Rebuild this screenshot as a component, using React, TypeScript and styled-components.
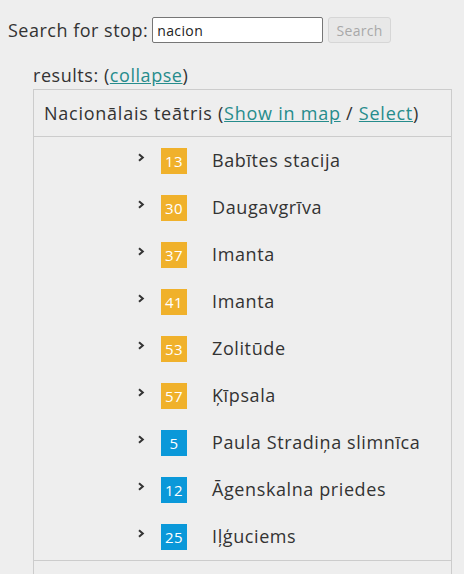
import React from "react";
import styled, { createGlobalStyle } from "styled-components";

const Global = createGlobalStyle`
  html, body { margin: 0; padding: 0; background: #eeeeee; }
  body { font-family: "Open Sans", "Noto Sans", sans-serif; color: #333333; }
`;

const Page = styled.div`
  padding: 17px 8px 0 8px;
  height: 557px;
  overflow: hidden;
`;

const SearchRow = styled.form`
  display: flex;
  align-items: center;
  height: 26px;
`;

const Label = styled.label`
  font-size: 18px;
  letter-spacing: 0.5px;
  margin-right: 4px;
`;

const Input = styled.input`
  box-sizing: border-box;
  width: 171px;
  height: 26px;
  border: 1px solid #767676;
  border-radius: 2px;
  background: #fff;
  font-family: inherit;
  font-size: 14px;
  letter-spacing: 0.4px;
  color: #222;
  padding: 0 4px;
  margin-right: 5px;
`;

const Button = styled.button`
  box-sizing: border-box;
  height: 26px;
  width: 63px;
  border: 1px solid #d6d6d6;
  border-radius: 3px;
  background: #e8e8e8;
  color: #a8a8a8;
  font-family: inherit;
  font-size: 14px;
  letter-spacing: 0.3px;
  padding: 0;
`;

const Results = styled.section`
  margin: 22px 0 0 25px;
  width: 419px;
`;

const ResultsTitle = styled.div`
  font-size: 18px;
  letter-spacing: 0.55px;
  line-height: 20px;
  height: 24px;
`;

const Link = styled.a`
  color: #268c8c;
  text-decoration: underline;
  cursor: pointer;
`;

const Box = styled.div`
  border: 1px solid #cccccc;
  border-bottom: none;
  height: 600px;
`;

const Header = styled.div`
  height: 47px;
  display: flex;
  align-items: center;
  padding: 0 0 1px 10px;
  box-sizing: border-box;
  font-size: 18px;
  letter-spacing: 0.75px;
  white-space: nowrap;
  border-bottom: 1px solid #cccccc;
`;

const List = styled.ul`
  list-style: none;
  margin: 0;
  padding: 0 0 0 100px;
  border-bottom: 1px solid #cccccc;
`;

const Row = styled.li`
  height: 47px;
  display: grid;
  grid-template-columns: 27px 26px 1fr;
  align-items: center;
`;

const Chevron = styled.svg`
  width: 8px;
  height: 9px;
  margin-left: 3px;
  margin-top: -6px;
`;

const Badge = styled.span<{ $color: string }>`
  width: 26px;
  height: 26px;
  background: ${(p) => p.$color};
  color: #ffffff;
  font-size: 15px;
  letter-spacing: 0.3px;
  display: flex;
  align-items: center;
  justify-content: center;
`;

const StopName = styled.span`
  font-size: 18px;
  letter-spacing: 0.6px;
  margin-left: 25px;
  white-space: nowrap;
  line-height: 22px;
  padding-bottom: 2px;
`;

const ORANGE = "#f0b12b";
const BLUE = "#0a98d9";

const stops = [
  { n: "13", c: ORANGE, name: "Babītes stacija" },
  { n: "30", c: ORANGE, name: "Daugavgrīva" },
  { n: "37", c: ORANGE, name: "Imanta" },
  { n: "41", c: ORANGE, name: "Imanta" },
  { n: "53", c: ORANGE, name: "Zolitūde" },
  { n: "57", c: ORANGE, name: "Ķīpsala" },
  { n: "5", c: BLUE, name: "Paula Stradiņa slimnīca" },
  { n: "12", c: BLUE, name: "Āgenskalna priedes" },
  { n: "25", c: BLUE, name: "Iļģuciems" },
];

export default function App() {
  return (
    <>
      <Global />
      <Page>
        <SearchRow onSubmit={(e) => e.preventDefault()}>
          <Label>Search for stop:</Label>
          <Input defaultValue="nacion" />
          <Button disabled>Search</Button>
        </SearchRow>
        <Results>
          <ResultsTitle>
            results: (<Link>collapse</Link>)
          </ResultsTitle>
          <Box>
            <Header>
              <span>
                Nacionālais teātris (<Link>Show in map</Link> / <Link>Select</Link>)
              </span>
            </Header>
            <List>
              {stops.map((s, i) => (
                <Row key={i}>
                  <Chevron viewBox="0 0 8 9">
                    <path d="M2 1.2 L5.8 4.5 L2 7.8" fill="none" stroke="#333" strokeWidth="2" />
                  </Chevron>
                  <Badge $color={s.c}>{s.n}</Badge>
                  <StopName>{s.name}</StopName>
                </Row>
              ))}
            </List>
          </Box>
        </Results>
      </Page>
    </>
  );
}
